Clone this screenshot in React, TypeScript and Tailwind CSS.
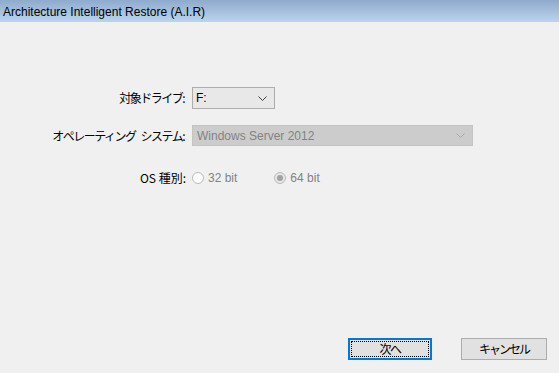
export default function App() {
  const jp = { fontFamily: '"Noto Sans CJK JP", "Liberation Sans", sans-serif' };
  return (
    <div
      className="flex h-[373px] w-[559px] flex-col bg-[#f0f0f0] text-[12px] text-black"
      style={{ fontFamily: '"Liberation Sans", "Noto Sans CJK JP", sans-serif' }}
    >
      {/* Title bar */}
      <div className="flex h-[22px] items-center bg-gradient-to-b from-[#8eabcd] to-[#bdd3ec] pl-[3px] pt-[1px] text-[12px] leading-none text-black">
        Architecture Intelligent Restore (A.I.R)
      </div>

      {/* Form */}
      <div className="mt-[65px] flex flex-col">
        {/* Drive */}
        <div className="flex items-center">
          <label className="w-[186px] pr-[2px] text-right leading-none tracking-[-1.5px]" style={jp}>
            対象ドライブ:
          </label>
          <div className="ml-[6px] flex h-[22px] w-[83px] items-center justify-between border border-[#adadad] bg-[#e8e8e8] pl-[3px] pr-[7px]">
            <span className="leading-none">F:</span>
            <svg width="9" height="5" viewBox="0 0 9 5" fill="none">
              <path d="M0.5 0.5 L4.5 4.5 L8.5 0.5" stroke="#404040" strokeWidth="1" />
            </svg>
          </div>
        </div>

        {/* OS */}
        <div className="mt-[16px] flex items-center">
          <label className="w-[186px] pr-[2px] text-right leading-none tracking-[-1.5px]" style={jp}>
            オペレーティング<span className="inline-block w-[5px]" />システム:
          </label>
          <div className="ml-[6px] flex h-[21px] w-[281px] items-center justify-between border border-[#c4c4c4] bg-[#cccccc] pl-[4px] pr-[7px] text-[#838383]">
            <span className="leading-none">Windows Server 2012</span>
            <svg width="9" height="5" viewBox="0 0 9 5" fill="none">
              <path d="M0.5 0.5 L4.5 4.5 L8.5 0.5" stroke="#a8a8a8" strokeWidth="1" />
            </svg>
          </div>
        </div>

        {/* OS type */}
        <div className="mt-[26px] flex items-center">
          <label className="w-[186px] text-right leading-none" style={jp}>
            OS 種別:
          </label>
          <div className="ml-[6px] flex items-center text-[#838383]">
            <span className="h-[12px] w-[12px] rounded-full border border-[#bcbcbc] bg-white" />
            <span className="ml-[4px] leading-none">32 bit</span>
            <span className="ml-[37px] flex h-[12px] w-[12px] items-center justify-center rounded-full border border-[#bcbcbc] bg-[#e6e6e6]">
              <span className="h-[6px] w-[6px] rounded-full bg-[#a3a3a3]" />
            </span>
            <span className="ml-[4px] leading-none">64 bit</span>
          </div>
        </div>
      </div>

      {/* Buttons */}
      <div className="mt-auto flex justify-end gap-[29px] pb-[13px] pr-[12px]" style={jp}>
        <button className="flex h-[22px] w-[84px] items-center justify-center border-2 border-[#0078d7] bg-[#e1e1e1] p-[1px]">
          <span className="flex h-full w-full items-center justify-center border border-dotted border-black leading-none tracking-[-1.5px]">
            次へ
          </span>
        </button>
        <button className="flex h-[22px] w-[86px] items-center justify-center border border-[#adadad] bg-[#e1e1e1] leading-none tracking-[-2px]">
          キャンセル
        </button>
      </div>
    </div>
  );
}
